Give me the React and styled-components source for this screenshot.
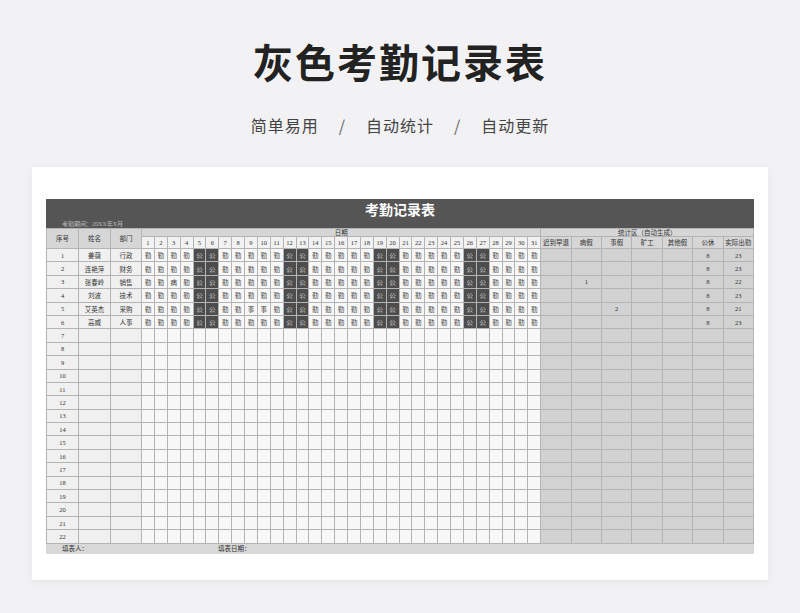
import React from "react";
import styled, { createGlobalStyle } from "styled-components";

const Global = createGlobalStyle`
  body { margin: 0; background: #f2f2f4; font-family: "Noto Sans CJK SC", "Noto Sans", sans-serif; }
`;

const people = [
  { name: "姜薇", dept: "行政", special: {}, sick: "", leave: "", actual: 23 },
  { name: "连艳萍", dept: "财务", special: {}, sick: "", leave: "", actual: 23 },
  { name: "张春岭", dept: "销售", special: { 3: "病" }, sick: "1", leave: "", actual: 22 },
  { name: "刘波", dept: "技术", special: {}, sick: "", leave: "", actual: 23 },
  { name: "艾英杰", dept: "采购", special: { 9: "事", 10: "事" }, sick: "", leave: "2", actual: 21 },
  { name: "高威", dept: "人事", special: {}, sick: "", leave: "", actual: 23 },
];
const rest = [5, 6, 12, 13, 19, 20, 26, 27];
const days = Array.from({ length: 31 }, (_, i) => i + 1);
const stats = ["迟到早退", "病假", "事假", "旷工", "其他假", "公休", "实际出勤"];

const App = () => (
  <>
    <Global />
    <Page>
      <Title>灰色考勤记录表</Title>
      <Subtitle>
        <span>简单易用</span><Sep>/</Sep><span>自动统计</span><Sep>/</Sep><span>自动更新</span>
      </Subtitle>
      <Card>
        <Sheet>
          <TitleBar>考勤记录表</TitleBar>
          <Period>考勤期间：20XX年X月</Period>
          <Table>
            <colgroup>
              <col style={{ width: 32 }} />
              <col style={{ width: 32 }} />
              <col style={{ width: 31 }} />
              {days.map((d) => <col key={d} />)}
              {stats.map((s) => <col key={s} style={{ width: 30.4 }} />)}
            </colgroup>
            <thead>
              <tr>
                <Head rowSpan={2}>序号</Head>
                <Head rowSpan={2}>姓名</Head>
                <Head rowSpan={2}>部门</Head>
                <Head colSpan={31} $short>日期</Head>
                <Head colSpan={7} $short>统计区（自动生成）</Head>
              </tr>
              <tr>
                {days.map((d) => <DayHead key={d}>{d}</DayHead>)}
                {stats.map((s) => <Head key={s}>{s}</Head>)}
              </tr>
            </thead>
            <tbody>
              {Array.from({ length: 22 }, (_, i) => {
                const p = people[i];
                return (
                  <tr key={i}>
                    <Side>{i + 1}</Side>
                    <Side>{p ? p.name : ""}</Side>
                    <Side>{p ? p.dept : ""}</Side>
                    {days.map((d) => {
                      const off = p && rest.includes(d);
                      return (
                        <Day key={d} $off={off}>
                          {p ? (off ? "公" : p.special[d] || "勤") : ""}
                        </Day>
                      );
                    })}
                    <Stat />
                    <Stat>{p ? p.sick : ""}</Stat>
                    <Stat>{p ? p.leave : ""}</Stat>
                    <Stat />
                    <Stat />
                    <Stat>{p ? 8 : ""}</Stat>
                    <Stat>{p ? p.actual : ""}</Stat>
                  </tr>
                );
              })}
            </tbody>
          </Table>
          <Footer>
            <span>填表人：</span>
            <span>填表日期：</span>
          </Footer>
        </Sheet>
      </Card>
    </Page>
  </>
);

export default App;

const Page = styled.div`
  width: 800px;
  height: 613px;
  display: flex;
  flex-direction: column;
  align-items: center;
  overflow: hidden;
`;

const Title = styled.h1`
  margin: 33px 0 0;
  font-size: 40px;
  font-weight: 700;
  color: #222;
  letter-spacing: 2px;
  line-height: 56px;
`;

const Subtitle = styled.div`
  margin-top: 24px;
  font-size: 16px;
  color: #444;
  display: flex;
  gap: 20px;
  letter-spacing: 1px;
`;

const Sep = styled.span`
  color: #666;
`;

const Card = styled.div`
  margin-top: 30px;
  width: 736px;
  height: 413px;
  background: #fff;
  box-shadow: 0 2px 8px rgba(0, 0, 0, 0.06);
  padding: 32px 14px 0;
  box-sizing: border-box;
`;

const Sheet = styled.div`
  width: 708px;
  font-family: "Liberation Serif", "Noto Sans CJK SC", serif;
  color: #333;
`;

const TitleBar = styled.div`
  background: #555;
  color: #fff;
  height: 21px;
  line-height: 21px;
  text-align: center;
  font-size: 14px;
  font-weight: 700;
  font-family: "Noto Sans CJK SC", sans-serif;
`;

const Period = styled.div`
  background: #555;
  color: #bbb;
  font-size: 6px;
  height: 8px;
  line-height: 8px;
  padding-left: 16px;
`;

const Table = styled.table`
  width: 708px;
  border-collapse: collapse;
  table-layout: fixed;
  font-size: 6.5px;
  td, th { border: 1px solid #b4b4b4; padding: 0; text-align: center; overflow: hidden; white-space: nowrap; }
`;

const Head = styled.th`
  background: #d6d6d6;
  font-weight: 400;
  height: ${({ $short }) => ($short ? "7px" : "11px")};
  line-height: 7px;
`;

const DayHead = styled.th`
  background: #f2f2f2;
  font-weight: 400;
  height: 11px;
`;

const Side = styled.td`
  background: #f0f0f0;
  height: 12.4px;
`;

const Day = styled.td`
  background: ${({ $off }) => ($off ? "#4d4d4d" : "#f7f7f7")};
  color: ${({ $off }) => ($off ? "#ccc" : "#333")};
`;

const Stat = styled.td`
  background: #d2d2d2;
`;

const Footer = styled.div`
  background: #d8d8d8;
  height: 10px;
  line-height: 10px;
  font-size: 6.5px;
  display: flex;
  padding-left: 16px;
  gap: 130px;
`;
